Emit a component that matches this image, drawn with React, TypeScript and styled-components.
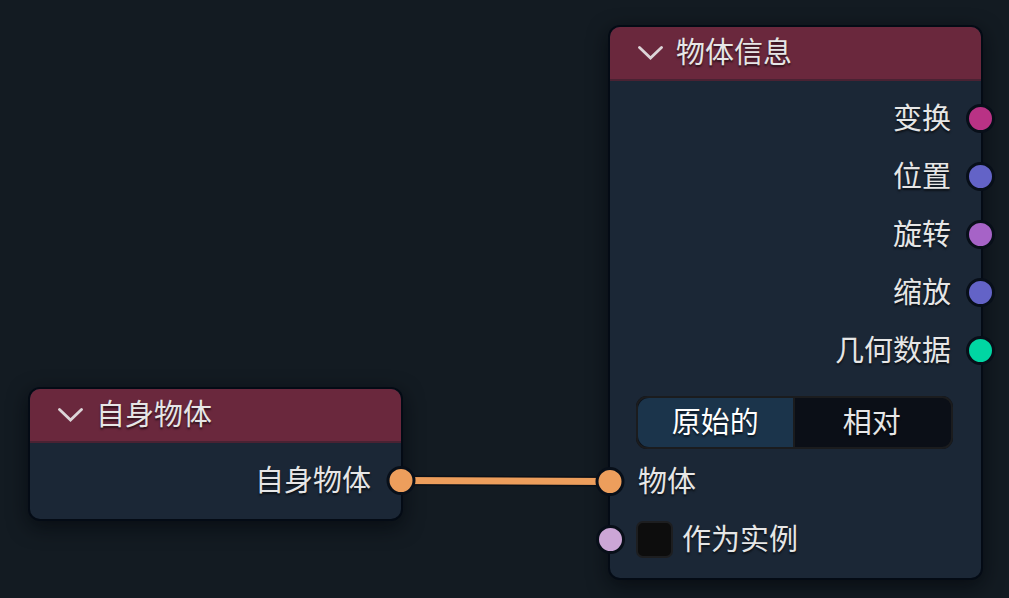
import React from "react";
import styled, { createGlobalStyle } from "styled-components";

const GlobalStyle = createGlobalStyle`
  *, *::before, *::after { box-sizing: border-box; }
  body {
    margin: 0;
    background: #131b22;
    color: #e6e6e6;
    font-family: "Noto Sans CJK SC", sans-serif;
    font-size: 29px;
    line-height: 40px;
  }
  button, input { font: inherit; color: inherit; }
`;

const Canvas = styled.main`
  position: relative;
  min-height: 100vh;
  overflow: hidden;
  text-shadow: 0 2px 2px rgba(0, 0, 0, 0.6);
`;

const NodeBox = styled.section<{ $x: number; $y: number }>`
  position: absolute;
  left: ${(p) => p.$x}px;
  top: ${(p) => p.$y}px;
  width: 371px;
  border-radius: 10px;
  background: #1b2736;
  box-shadow: 0 0 0 2px #040b15, 0 6px 20px 2px rgba(3, 6, 10, 0.65);
`;

const NodeHeader = styled.header`
  display: flex;
  align-items: center;
  gap: 13px;
  height: 54px;
  padding: 0 28px 1px;
  border-bottom: 2px solid #4a2233;
  border-radius: 10px 10px 0 0;
  background: #6a283d;
`;

const NodeTitle = styled.h2`
  margin: 0;
  padding-bottom: 6px;
  font-size: 29px;
  font-weight: 400;
`;

const Caption = styled.span`
  padding-bottom: 6px;
`;

const CollapseButton = styled.button`
  display: flex;
  padding: 0;
  border: 0;
  background: none;
`;

const NodeBody = styled.div`
  display: flex;
  flex-direction: column;
  gap: 1px;
  padding: 9px 0 10px;
`;

const Row = styled.div<{ $side: "in" | "out" }>`
  position: relative;
  display: flex;
  align-items: center;
  justify-content: ${(p) => (p.$side === "out" ? "flex-end" : "flex-start")};
  height: 57px;
  padding: 0 30px 0 28px;
`;

const Socket = styled.span<{ $side: "in" | "out"; $color: string }>`
  position: absolute;
  top: 14px;
  ${(p) => (p.$side === "out" ? "right" : "left")}: -14px;
  width: 29px;
  height: 29px;
  border: 3px solid #080f19;
  border-radius: 50%;
  background: ${(p) => p.$color};
`;

const Segmented = styled.fieldset`
  display: grid;
  grid-template-columns: 1fr 1fr;
  height: 53px;
  margin: 16px 28px 3px 26px;
  padding: 0;
  overflow: hidden;
  border: 2px solid #1b1c1e;
  border-radius: 11px;
  background: #0b0f17;
`;

const Segment = styled.label`
  position: relative;
  display: flex;
  align-items: center;
  justify-content: center;
  border-right: 2px solid #1b1c1e;

  &:last-child { border-right-color: transparent; }
  &:has(input:checked) { background: #1b344b; color: #ffffff; }
`;

const SegmentInput = styled.input`
  position: absolute;
  inset: 0;
  margin: 0;
  appearance: none;
`;

const CheckLabel = styled.label`
  display: flex;
  align-items: center;
  gap: 9px;
  margin-left: -2px;
`;

const CheckBox = styled.input`
  width: 37px;
  height: 37px;
  margin: 0;
  border: 2px solid #1d1e20;
  border-radius: 7px;
  background: #0d0d0d;
  appearance: none;

  &:checked { background: #1b344b; }
`;

const LinkLayer = styled.svg`
  position: absolute;
  inset: 0;
  width: 100%;
  height: 100%;
  pointer-events: none;
`;

const outputs = [
  { label: "变换", color: "#b93285" },
  { label: "位置", color: "#6363c7" },
  { label: "旋转", color: "#a663c7" },
  { label: "缩放", color: "#6363c7" },
  { label: "几何数据", color: "#00d6a3" },
];

function Header({ title }: { title: string }) {
  return (
    <NodeHeader>
      <CollapseButton type="button" aria-label={title}>
        <svg width="25" height="16" viewBox="0 0 25 16" fill="none" aria-hidden="true">
          <path d="M1.5 2.5 12.5 13 23.5 2.5" stroke="#dcd5d8" strokeWidth="2.8" strokeLinecap="round" />
        </svg>
      </CollapseButton>
      <NodeTitle>{title}</NodeTitle>
    </NodeHeader>
  );
}

export default function App() {
  return (
    <>
      <GlobalStyle />
      <Canvas>
        <NodeBox $x={30} $y={389}>
          <Header title="自身物体" />
          <NodeBody>
            <Row $side="out">
              <Caption>自身物体</Caption>
            </Row>
          </NodeBody>
        </NodeBox>
        <NodeBox $x={610} $y={27}>
          <Header title="物体信息" />
          <NodeBody>
            {outputs.map((o) => (
              <Row key={o.label} $side="out">
                <Caption>{o.label}</Caption>
                <Socket $side="out" $color={o.color} />
              </Row>
            ))}
            <Segmented>
              <Segment>
                <SegmentInput type="radio" name="space" defaultChecked />
                <Caption>原始的</Caption>
              </Segment>
              <Segment>
                <SegmentInput type="radio" name="space" />
                <Caption>相对</Caption>
              </Segment>
            </Segmented>
            <Row $side="in">
              <Caption>物体</Caption>
            </Row>
            <Row $side="in">
              <Socket $side="in" $color="#cca6d6" />
              <CheckLabel>
                <CheckBox type="checkbox" />
                <Caption>作为实例</Caption>
              </CheckLabel>
            </Row>
          </NodeBody>
        </NodeBox>
        <LinkLayer aria-hidden="true">
          <path d="M401 480.5 610 481.5" stroke="#0b1017" strokeWidth="10" />
          <path d="M401 480.5 610 481.5" stroke="#ed9e5c" strokeWidth="7" />
          <circle cx="401" cy="480.5" r="13" fill="#ed9e5c" stroke="#080f19" strokeWidth="3" />
          <circle cx="610" cy="481.5" r="13" fill="#ed9e5c" stroke="#080f19" strokeWidth="3" />
        </LinkLayer>
      </Canvas>
    </>
  );
}
